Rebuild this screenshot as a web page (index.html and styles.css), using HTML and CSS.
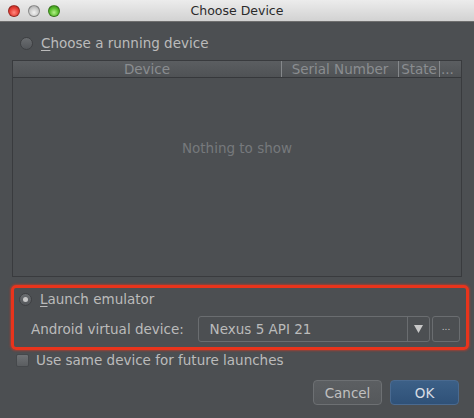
FILE: index.html
```html
<!DOCTYPE html>
<html>
<head>
<meta charset="utf-8">
<link rel="stylesheet" href="styles.css">
</head>
<body>
<div class="window">
  <div class="titlebar">
    <div class="lights">
      <span class="light red"></span>
      <span class="light grey"></span>
      <span class="light green"></span>
    </div>
    <div class="title">Choose Device</div>
  </div>
  <div class="content">
    <div class="radio-row top-radio">
      <span class="radio"></span>
      <span class="label"><u>C</u>hoose a running device</span>
    </div>
    <div class="table">
      <div class="thead">
        <div class="th col-device">Device</div>
        <div class="th col-serial">Serial Number</div>
        <div class="th col-state">State</div>
        <div class="th col-more">...</div>
      </div>
      <div class="tbody">Nothing to show</div>
    </div>
    <div class="emu-box">
      <div class="radio-row">
        <span class="radio checked"></span>
        <span class="label"><u>L</u>aunch emulator</span>
      </div>
      <div class="avd-row">
        <span class="avd-label">Android virtual device:</span>
        <div class="combo">
          <span class="combo-text">Nexus 5 API 21</span>
          <span class="combo-arrow">
            <svg width="9" height="8" viewBox="0 0 9 8"><path d="M0 0 H9 L4.5 8 Z" fill="#c8c8c8"/></svg>
          </span>
        </div>
        <div class="more-btn">...</div>
      </div>
    </div>
    <div class="check-row">
      <span class="checkbox"></span>
      <span class="label">Use same device for future launches</span>
    </div>
    <div class="buttons">
      <div class="btn cancel">Cancel</div>
      <div class="btn ok">OK</div>
    </div>
  </div>
</div>
</body>
</html>
```

FILE: styles.css
```css
* { box-sizing: border-box; }
html, body { margin: 0; padding: 0; }
body {
  background: #4c4f52;
  font-family: "DejaVu Sans", "Liberation Sans", sans-serif;
  font-size: 13.5px;
  color: #bbbbbb;
}
.window {
  width: 474px;
  height: 418px;
  background: #4c4f52;
  display: flex;
  flex-direction: column;
}
.titlebar {
  height: 22px;
  background: linear-gradient(#ececec, #d2d2d2);
  border-bottom: 1px solid #6e6e6e;
  display: flex;
  align-items: center;
  position: relative;
}
.lights {
  display: flex;
  gap: 8px;
  padding-left: 8px;
}
.light {
  width: 12px;
  height: 12px;
  border-radius: 50%;
  border: 1px solid rgba(0,0,0,0.3);
}
.light.red { background: radial-gradient(circle at 50% 65%, #ff8a80 0%, #e8433a 50%, #b01e16 100%); }
.light.grey { background: radial-gradient(circle at 50% 65%, #f2f2f2 0%, #c9c9c9 55%, #9a9a9a 100%); }
.light.green { background: radial-gradient(circle at 50% 65%, #b5f08a 0%, #5cbf2f 50%, #2f7e12 100%); }
.title {
  position: absolute;
  left: 0; right: 0; top: 0;
  height: 21px;
  line-height: 22px;
  text-align: center;
  color: #2a2a2a;
  font-size: 12.5px;
  pointer-events: none;
}
.content {
  flex: 1;
  display: flex;
  flex-direction: column;
  padding: 0 12px 0 12px;
}
.radio-row {
  display: flex;
  align-items: center;
  height: 20px;
}
.top-radio {
  margin-top: 11px;
  padding-left: 8px;
}
.radio {
  width: 13px;
  height: 13px;
  border-radius: 50%;
  background: linear-gradient(#6a6d70, #53565a);
  border: 1px solid #3e4043;
  margin-right: 8px;
  position: relative;
  flex: none;
}
.radio.checked::after {
  content: "";
  position: absolute;
  left: 3px; top: 3px;
  width: 5px; height: 5px;
  border-radius: 50%;
  background: #c8c8c8;
}
.label u { text-decoration: underline; text-underline-offset: 2px; }
.table {
  margin-top: 7px;
  height: 217px;
  border: 1px solid #393b3e;
  display: flex;
  flex-direction: column;
}
.thead {
  height: 17px;
  display: flex;
  background: linear-gradient(#5b5e61, #4f5255);
  border-bottom: 1px solid #36383b;
  color: #8a8d90;
  font-size: 13.5px;
  line-height: 17px;
}
.th { text-align: center; white-space: nowrap; overflow: hidden; }
.col-device { width: 268px; }
.col-serial { width: 117px; border-left: 1px solid #85888b; }
.col-state { width: 41px; border-left: 1px solid #85888b; }
.col-more { flex: 1; border-left: 1px solid #85888b; text-align: left; padding-left: 1px; }
.tbody {
  flex: 1;
  display: flex;
  align-items: center;
  justify-content: center;
  color: #76797c;
  padding-bottom: 58px;
}
.emu-box {
  margin-top: 8px;
  margin-left: -1px;
  margin-right: -7px;
  height: 65px;
  border: 3px solid #e8341c;
  border-radius: 5px;
  box-shadow: 0 0 2px 1px rgba(232, 52, 28, 0.5);
  padding: 1px 6px 0 5px;
  display: flex;
  flex-direction: column;
}
.avd-row {
  display: flex;
  align-items: center;
  margin-top: 7px;
}
.avd-label {
  padding-left: 12px;
  width: 179px;
}
.combo {
  width: 233px;
  height: 26px;
  border: 1px solid #6a6d70;
  border-radius: 3px;
  background: #4c4f52;
  display: flex;
  align-items: center;
}
.combo-text { flex: 1; padding-left: 11px; color: #bbbbbb; }
.combo-arrow {
  width: 22px;
  height: 100%;
  border-left: 1px solid #6a6d70;
  display: flex;
  align-items: center;
  justify-content: center;
}
.more-btn {
  margin-left: 2px;
  width: 28px;
  height: 26px;
  border: 1px solid #6a6d70;
  border-radius: 3px;
  display: flex;
  align-items: center;
  justify-content: center;
  font-size: 9px;
  color: #c8c8c8;
  padding-bottom: 4px;
}
.check-row {
  display: flex;
  align-items: center;
  margin-top: 2px;
  padding-left: 4px;
  height: 16px;
}
.checkbox {
  width: 13px;
  height: 13px;
  background: linear-gradient(#6f7275, #5a5d60);
  border: 1px solid #45484b;
  border-radius: 2px;
  margin-right: 7px;
}
.buttons {
  display: flex;
  justify-content: flex-end;
  gap: 8px;
  margin-top: 12px;
  padding-right: 3px;
}
.btn {
  width: 69px;
  height: 25px;
  border-radius: 4px;
  display: flex;
  align-items: center;
  justify-content: center;
  font-size: 13.5px;
}
.cancel {
  background: linear-gradient(#5c5f62, #55585b);
  border: 1px solid #6d7073;
  color: #c0c0c0;
}
.ok {
  background: linear-gradient(#3c6087, #2f5178);
  border: 1px solid #4a6a90;
  color: #d8dde4;
}
```
